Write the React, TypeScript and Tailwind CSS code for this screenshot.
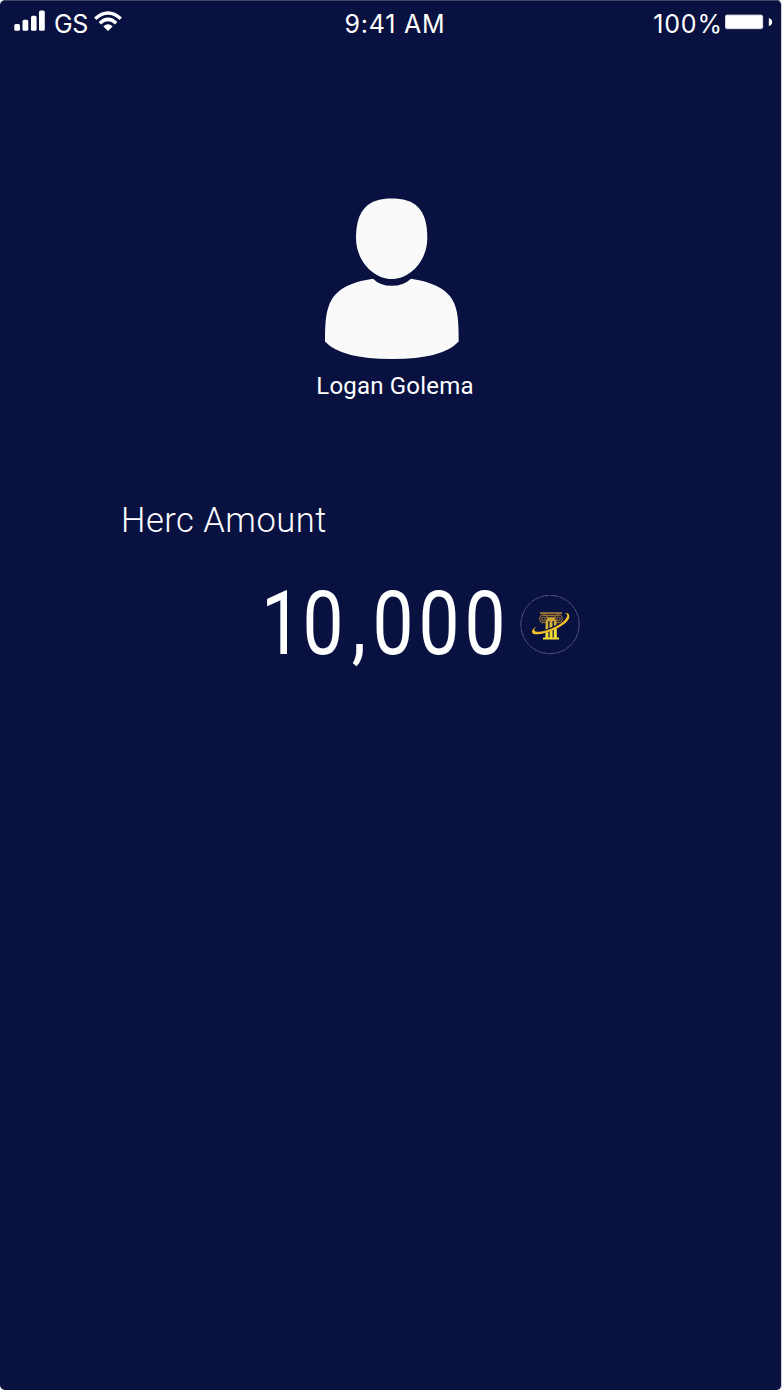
function SignalIcon() {
  return (
    <svg width="31" height="21" viewBox="0 0 31 21" fill="#fff">
      <rect x="0.3" y="14" width="5.7" height="6.8" rx="1.6" />
      <rect x="8.5" y="9.8" width="5.8" height="11" rx="1.6" />
      <rect x="17" y="5.8" width="5.6" height="15" rx="1.6" />
      <rect x="25" y="0.6" width="5.8" height="20.2" rx="1.6" />
    </svg>
  );
}

function WifiIcon() {
  return (
    <svg width="28" height="21" viewBox="0 0 28 21" fill="none" stroke="#fff">
      <path d="M1.2 7.8 Q14 -3.6 26.8 7.8" strokeWidth="3.4" />
      <path d="M5.8 12.2 Q14 4.6 22.2 12.2" strokeWidth="3.4" />
      <path d="M9.3 15.4 Q14 11.2 18.7 15.4 L14 19.9 Z" fill="#fff" stroke="none" />
    </svg>
  );
}

function BatteryIcon() {
  return (
    <svg width="48" height="16" viewBox="0 0 48 16">
      <rect x="0" y="0.8" width="38" height="14.2" rx="2" fill="#fff" stroke="#7d82a0" strokeWidth="0.6" />
      <path d="M43.8 4 Q47.2 5 47.2 8 Q47.2 11 43.8 12 Z" fill="#fff" />
    </svg>
  );
}

function Avatar() {
  return (
    <svg width="136" height="163" viewBox="0 0 136 163" fill="#fafafa">
      <path d="M67.7 1.6 C90 1.6 103.3 11 103.3 41 C103.3 64 86 82 67.7 82 C49.5 82 32 64 32 41 C32 11 46 1.6 67.7 1.6 Z" />
      <path d="M49 81.7 Q56 88.8 67.7 88.8 Q79.5 88.8 87 81.7 C109 85 125 92.5 130.5 107 C134.5 117 134.7 130 134.7 144.5 Q119 162 68 162 Q17 162 1 144.5 C1 130 1.3 117 5.5 107 C11.5 92.5 26 85 49 81.7 Z" />
    </svg>
  );
}

function HercCoin() {
  return (
    <svg width="60" height="60" viewBox="0 0 60 60" fill="none">
      <defs>
        <linearGradient id="pillar" x1="0" y1="16" x2="0" y2="45" gradientUnits="userSpaceOnUse">
          <stop offset="0" stopColor="#a87b32" />
          <stop offset="0.6" stopColor="#e5c536" />
          <stop offset="1" stopColor="#faef3c" />
        </linearGradient>
      </defs>
      <circle cx="30" cy="29.5" r="29.2" stroke="#626784" strokeWidth="0.8" strokeDasharray="9 0.8" />
      <path d="M20 17.3H42V18.8H20Z" fill="#b98a32" />
      <g stroke="#9a7334" strokeWidth="1.2">
        <path d="M23.5 20.4H38.5M26 22.4H36" />
        <circle cx="23.6" cy="23.8" r="3.9" />
        <circle cx="23.6" cy="23.8" r="1.8" />
        <circle cx="38.4" cy="23.8" r="3.9" />
        <circle cx="38.4" cy="23.8" r="1.8" />
      </g>
      <path d="M25.6 25.5H28.2V33.5L25.6 34.4ZM29.5 23.5H32.5V31.8L29.5 33ZM33.9 25.5H36.5V29.7L33.9 31Z" fill="url(#pillar)" />
      <path d="M28.2 22.8H34.2L36.5 26H25.7Z" fill="#d2a53b" />
      <path d="M25.4 37.5L28.4 36.9V43H25.4ZM29.6 36.4L32.6 35.2V43H29.6ZM33.8 34.6L36.8 33.2V43H33.8ZM23 42.4H39V44.6H23Z" fill="#f2dd38" />
      <path d="M16.7 31.2C9 36 11 40.5 20 39C32 37 51 28 49.2 20.4C48.7 18.2 46.8 17.8 45 18.3C47.5 18.7 47.8 20.5 46.5 22.7C42 30 28 36 19.5 36.7C14.2 37.2 12.5 34.8 16.7 31.2Z" fill="#f6c127" />
    </svg>
  );
}

export default function App() {
  return (
    <div className="h-[1390px] w-[782px] overflow-hidden bg-white">
      <main className="flex h-full flex-col rounded-[5px] border-t border-r border-t-[#424969] border-r-[#cbcdda] bg-[#08113f] font-['Roboto',sans-serif] text-white">
        <header className="grid h-[45px] grid-cols-3 font-['Inter',sans-serif] text-[25px] leading-[47px] font-normal">
          <div className="flex pl-[14px]">
            <div className="pt-[9px]"><SignalIcon /></div>
            <span className="ml-[9px] w-[36px] tracking-[-0.5px]">GS</span>
            <div className="ml-[4px] pt-[10px]"><WifiIcon /></div>
          </div>
          <div className="pl-[9px] text-center tracking-[0.8px]">9:41 AM</div>
          <div className="flex justify-end pr-[8px]">
            <span className="mr-[2px] tracking-[0.9px]">100%</span>
            <div className="pt-[13px]"><BatteryIcon /></div>
          </div>
        </header>

        <section className="mt-[151px] flex flex-col items-center pl-[2px]">
          <Avatar />
          <h1 className="mt-[10px] pl-[7px] text-[24px] leading-[32px] font-normal tracking-[0.2px] whitespace-nowrap">
            Logan Golema
          </h1>
        </section>

        <section className="mt-[96px]">
          <h2 className="pl-[121px] text-[34.5px] leading-[44px] font-light tracking-[0.5px]">Herc Amount</h2>
          <div className="mt-[28px] flex h-[110px] items-start pl-[261px]">
            <div className="w-[259px]">
              <span className="inline-block origin-left scale-x-[0.82] text-[89px] leading-[108px] font-normal tracking-[6px] whitespace-nowrap">
                <span className="tracking-[0.5px]">1</span>0<span className="ml-[4px] mr-[2px]">,</span>000
              </span>
            </div>
            <div className="pt-[25px]"><HercCoin /></div>
          </div>
        </section>
      </main>
    </div>
  );
}
